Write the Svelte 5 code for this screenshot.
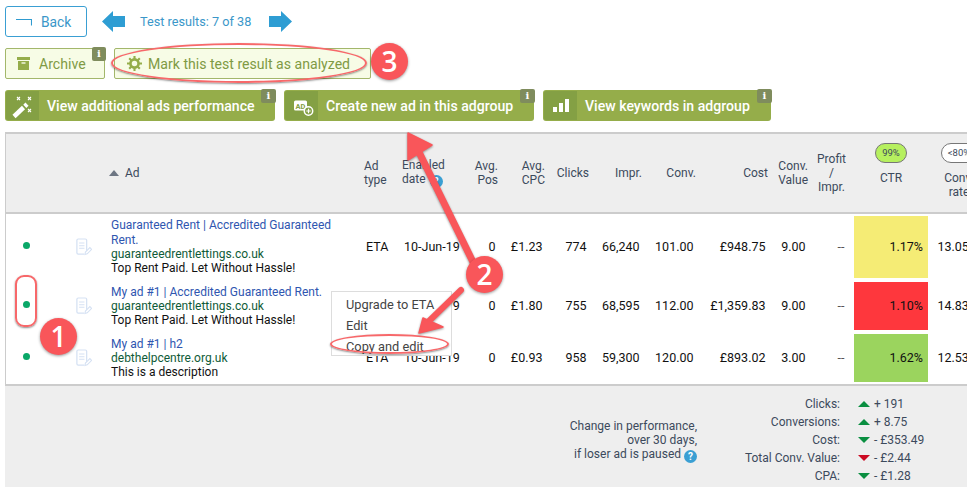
<script lang="ts">
  const rows = [
    { title: ['Guaranteed Rent | Accredited Guaranteed', 'Rent.'], url: 'guaranteedrentlettings.co.uk', desc: 'Top Rent Paid. Let Without Hassle!', type: 'ETA', date: '10-Jun-19', pos: '0', cpc: '£1.23', clicks: '774', impr: '66,240', conv: '101.00', cost: '£948.75', value: '9.00', ctr: '1.17%', tone: 'yellow', rate: '13.05%' },
    { title: ['My ad #1 | Accredited Guaranteed Rent.'], url: 'guaranteedrentlettings.co.uk', desc: 'Top Rent Paid. Let Without Hassle!', type: 'ETA', date: '10-Jun-19', pos: '0', cpc: '£1.80', clicks: '755', impr: '68,595', conv: '112.00', cost: '£1,359.83', value: '9.00', ctr: '1.10%', tone: 'red', rate: '14.83%' },
    { title: ['My ad #1 | h2'], url: 'debthelpcentre.org.uk', desc: 'This is a description', type: 'ETA', date: '10-Jun-19', pos: '0', cpc: '£0.93', clicks: '958', impr: '59,300', conv: '120.00', cost: '£893.02', value: '3.00', ctr: '1.62%', tone: 'green', rate: '12.53%' }
  ];

  const changes = [
    { label: 'Clicks:', dir: 'up', tone: 'good', value: '+ 191' },
    { label: 'Conversions:', dir: 'up', tone: 'good', value: '+ 8.75' },
    { label: 'Cost:', dir: 'down', tone: 'good', value: '- £353.49' },
    { label: 'Total Conv. Value:', dir: 'down', tone: 'bad', value: '- £2.44' },
    { label: 'CPA:', dir: 'down', tone: 'good', value: '- £1.28' }
  ];
</script>

<div class="page">
  <div class="nav">
    <button class="back">
      <svg width="16" height="8" viewBox="0 0 16 8"><path d="M0 1.500h15.500V7.500" fill="none" stroke="#2f9bd0" stroke-width="1.100" /></svg>
      Back
    </button>
    <svg class="arrow" width="23" height="21" viewBox="0 0 23 21"><path d="M0 10.500 11 0v5h12v11H11v5z" fill="#2e9dd3" /></svg>
    <span class="count">Test results: 7 of 38</span>
    <svg class="arrow" width="23" height="21" viewBox="0 0 23 21"><path d="M23 10.500 12 0v5H0v11h12v5z" fill="#2e9dd3" /></svg>
  </div>

  <div class="actions">
    <button class="light archive">
      <svg width="13" height="13" viewBox="0 0 13 13"><path d="M0 0h13v3H0zM1 4h11v9H1z" fill="#95ad4a" /><path d="M4.500 6h4" stroke="#f7fbe6" stroke-width="1.400" /></svg>
      Archive
      <span class="info">i</span>
    </button>
    <button class="light mark">
      <svg width="15" height="15" viewBox="0 0 17 17"><circle cx="8.500" cy="8.500" r="4.600" fill="none" stroke="#95ad4a" stroke-width="3" /><path d="M8.500 0v4M8.500 13v4M0 8.500h4M13 8.500h4M2.500 2.500l2.800 2.800M11.700 11.700l2.800 2.800M14.500 2.500l-2.800 2.800M5.300 11.700l-2.800 2.800" stroke="#95ad4a" stroke-width="2.400" /></svg>
      Mark this test result as analyzed
    </button>
  </div>

  <div class="actions tools">
    <button class="solid first">
      <span class="ico">
        <svg width="26" height="26" viewBox="0 0 26 26"><path d="M4 23.500 13.500 14.500" stroke="#fff" stroke-width="4.500" /><path d="M14.800 13.300 17 11.200" stroke="#fff" stroke-width="4.500" /><path d="M7 4l3 3M10 4 7 7M18 4l3 3M21 4l-3 3M18 16l3 3M21 16l-3 3" stroke="#fff" stroke-width="1.100" /></svg>
      </span>
      View additional ads performance
      <span class="info">i</span>
    </button>
    <button class="solid second">
      <span class="ico">
        <svg width="26" height="24" viewBox="0 0 26 24"><rect x="5" y="6.500" width="13" height="10" rx="1.500" fill="#fff" /><text x="11.500" y="14.500" text-anchor="middle" class="ad-mark">AD</text><circle cx="19.500" cy="17" r="4.200" fill="#84a044" stroke="#fff" stroke-width="1.500" /><path d="M17.300 17h4.400M19.500 14.800v4.400" stroke="#fff" stroke-width="1.200" /></svg>
      </span>
      Create new ad in this adgroup
      <span class="info">i</span>
    </button>
    <button class="solid third">
      <span class="ico">
        <svg width="16" height="13" viewBox="0 0 16 13"><path d="M0 8h4v5H0zM6 4h4v9H6zM12 0h4v13h-4z" fill="#fff" /></svg>
      </span>
      View keywords in adgroup
      <span class="info">i</span>
    </button>
  </div>

  <table>
    <colgroup>
      <col class="c-dot" /><col class="c-icon" /><col class="c-ad" /><col class="c-type" /><col class="c-date" />
      <col class="c-pos" /><col class="c-cpc" /><col class="c-clicks" /><col class="c-impr" /><col class="c-conv" />
      <col class="c-cost" /><col class="c-value" /><col class="c-profit" /><col class="c-ctr" /><col class="c-rate" />
    </colgroup>
    <thead>
      <tr>
        <th></th>
        <th></th>
        <th class="left ad-head"><span class="sort"></span>Ad</th>
        <th class="left">Ad<br />type</th>
        <th class="left">Enabled<br />date <span class="help head-help">?</span></th>
        <th>Avg.<br />Pos</th>
        <th>Avg.<br />CPC</th>
        <th>Clicks</th>
        <th>Impr.</th>
        <th>Conv.</th>
        <th>Cost</th>
        <th>Conv.<br />Value</th>
        <th class="center">Profit<br />/<br />Impr.</th>
        <th class="center metric">
          <span class="pill hit">99%</span>
          CTR
        </th>
        <th class="center metric">
          <span class="pill">&lt;80%</span>
          Conv.<br />rate
        </th>
      </tr>
    </thead>
    <tbody>
      {#each rows as row}
        <tr>
          <td class="center"><span class="dot"></span></td>
          <td class="center doc-cell">
            <svg class="doc" width="16" height="18" viewBox="0 0 18 20">
              <path d="M12 15V2.500A1.500 1.500 0 0 0 10.500 1h-8A1.500 1.500 0 0 0 1 2.500v14A1.500 1.500 0 0 0 2.500 18H9" fill="none" stroke="#d5e1f3" stroke-width="1.400" />
              <path d="M3.500 5.500h6M3.500 8.500h6M3.500 11.500h6" stroke="#d5e1f3" stroke-width="1.200" />
              <path d="M10 18.500l.6-2.800 5-5 2 2-5 5z" fill="#fff" stroke="#d5e1f3" stroke-width="1.200" />
            </svg>
          </td>
          <td class="left ad">
            {#each row.title as line}<span class="title">{line}</span>{/each}
            <span class="url">{row.url}</span>
            <span>{row.desc}</span>
          </td>
          <td class="left">{row.type}</td>
          <td class="left">{row.date}</td>
          <td>{row.pos}</td>
          <td>{row.cpc}</td>
          <td>{row.clicks}</td>
          <td>{row.impr}</td>
          <td>{row.conv}</td>
          <td>{row.cost}</td>
          <td>{row.value}</td>
          <td class="dash">--</td>
          <td class="score {row.tone}">{row.ctr}</td>
          <td class="rate">{row.rate}</td>
        </tr>
      {/each}
    </tbody>
  </table>

  <div class="summary">
    <p class="note">
      Change in performance,<br />over 30 days,<br />if loser ad is paused <span class="help">?</span>
    </p>
    <div class="changes">
      {#each changes as item}
        <span class="label">{item.label}</span>
        <span class="tri {item.dir} {item.tone}"></span>
        <span class="val">{item.value}</span>
      {/each}
    </div>
  </div>

  <!-- context menu and tutorial annotations sit on top of the table -->
  <div class="menu">
    <span>Upgrade to ETA</span>
    <span>Edit</span>
    <span>Copy and edit</span>
  </div>

  <span class="ring ring-mark"></span>
  <span class="ring ring-dot"></span>
  <span class="ring ring-copy"></span>

  <svg class="pointers" width="967" height="487" viewBox="0 0 967 487">
    <path d="M473 262 415 144" stroke="#f9565a" stroke-width="7" stroke-linecap="round" fill="none" />
    <path d="M408 133 408 160 432 145z" fill="#f9565a" stroke="#f9565a" stroke-width="1.500" stroke-linejoin="round" />
    <path d="M461 290 428 322" stroke="#f9565a" stroke-width="6" stroke-linecap="round" fill="none" />
    <path d="M419 333 423 318 443 327z" fill="#f9565a" stroke="#f9565a" stroke-width="1.500" stroke-linejoin="round" />
  </svg>

  <span class="step step-1">1</span>
  <span class="step step-2">2</span>
  <span class="step step-3">3</span>
</div>

<style>
  :global(body) {
    margin: 0;
    background: #fff;
  }

  .page {
    position: relative;
    width: 967px;
    height: 487px;
    overflow: hidden;
    font-family: Roboto, "Liberation Sans", sans-serif;
    font-size: 12px;
    color: #111;
  }

  button {
    position: relative;
    display: flex;
    align-items: center;
    box-sizing: border-box;
    padding: 0;
    font-family: inherit;
    cursor: pointer;
  }

  .nav {
    display: flex;
    align-items: center;
    height: 31px;
    padding: 6px 0 0 5px;
  }

  .back {
    width: 82px;
    height: 31px;
    gap: 9px;
    padding-left: 10px;
    background: #fff;
    border: 1px solid #3a9fd3;
    border-radius: 3px;
    color: #3a97c9;
    font-size: 13.800px;
  }

  .arrow {
    margin-left: 15px;
  }

  .count {
    width: 129px;
    margin-left: 15px;
    color: #3a97c9;
    font-size: 12.700px;
  }

  .count + .arrow {
    margin-left: 0;
  }

  .actions {
    display: flex;
    gap: 9px;
    margin: 11px 0 0 5px;
  }

  .light {
    height: 31px;
    background: #f7fce6;
    border: 1px solid #a3b76b;
    border-radius: 2px;
    color: #7f9a44;
    font-size: 14.100px;
  }

  .archive {
    width: 100px;
    gap: 9px;
    padding-left: 11px;
  }

  .mark {
    width: 257px;
    gap: 6px;
    padding-left: 12px;
  }

  .solid {
    height: 31px;
    background: #95ad4a;
    border: 0;
    border-radius: 3px;
    color: #fff;
    font-size: 14.100px;
    font-weight: 500;
  }

  .first { width: 270px; }
  .second { width: 250px; }
  .third { width: 228px; }

  .ico {
    display: flex;
    align-items: center;
    justify-content: center;
    align-self: stretch;
    width: 33px;
    margin: 1px 8px 1px 1px;
    background: #84a044;
    border-radius: 2px 0 0 2px;
  }

  .ad-mark {
    font-family: Roboto, sans-serif;
    font-size: 7.500px;
    font-weight: 700;
    fill: #84a044;
  }

  .info {
    position: absolute;
    top: -2px;
    right: -2px;
    width: 14px;
    height: 14px;
    border-radius: 2px;
    background: #7f8c5d;
    color: #fff;
    font-family: "DejaVu Serif", serif;
    font-size: 10px;
    font-weight: 700;
    line-height: 14px;
    text-align: center;
  }

  .solid .info {
    top: -1px;
    right: -1px;
    width: 15px;
  }

  table {
    width: 982px;
    margin: 11px 0 0 5px;
    border-collapse: separate;
    border-spacing: 0;
    table-layout: fixed;
    border-left: 1px solid #ccc;
    border-top: 2px solid #ccc;
  }

  .c-dot { width: 53px; }
  .c-icon { width: 47px; }
  .c-ad { width: 254px; }
  .c-type { width: 38px; }
  .c-date { width: 62px; }
  .c-pos { width: 42px; }
  .c-cpc { width: 47px; }
  .c-clicks { width: 44px; }
  .c-impr { width: 53px; }
  .c-conv { width: 54px; }
  .c-cost { width: 72px; }
  .c-value { width: 40px; }
  .c-profit { width: 39px; }
  .c-ctr { width: 80px; }
  .c-rate { width: 56px; }

  th {
    height: 80px;
    padding: 0 4px;
    box-sizing: border-box;
    background: #eee;
    border-bottom: 2px solid #ccc;
    color: #3c4a5c;
    font-size: 12px;
    font-weight: 400;
    line-height: 14px;
    text-align: right;
    white-space: nowrap;
  }

  td {
    padding: 0 6.500px 0 4px;
    font-size: 12.500px;
    line-height: 14.300px;
    text-align: right;
    white-space: nowrap;
  }

  tbody tr:nth-child(1) { height: 66px; }
  tbody tr:nth-child(2),
  tbody tr:nth-child(3) { height: 52px; }

  th.left { text-align: left; padding-right: 0; }
  td.left { text-align: left; padding: 0 0 0 6px; }
  td.center { text-align: center; padding: 0; }
  th.center { text-align: center; }

  .ad-head { padding-left: 3px; }

  .sort {
    display: inline-block;
    margin-right: 6px;
    vertical-align: 1px;
    border: 5px solid transparent;
    border-top: 0;
    border-bottom: 6px solid #6d7683;
  }

  td.ad {
    padding-left: 5px;
    font-size: 12px;
  }

  .ad span { display: block; }
  .title { color: #2f56b0; }
  .url { color: #0f5b38; }

  .dot {
    display: block;
    position: relative;
    left: -6px;
    top: -2px;
    width: 7px;
    height: 7px;
    margin: 0 auto;
    border-radius: 50%;
    background: #0aa868;
  }

  td.doc-cell { padding-left: 3px; }
  .doc { display: block; margin: 0 auto; }
  .dash { color: #555; }

  .metric { vertical-align: top; }

  .pill {
    display: block;
    width: fit-content;
    margin: 9px auto 8px;
    padding: 0 6px;
    border: 1px solid #777;
    border-radius: 10px;
    font-size: 9.500px;
    line-height: 18px;
  }

  .pill.hit { background: #b6f05f; }
  .metric:last-child .pill { background: #fff; }

  td.score {
    padding-right: 5px;
    border: solid #fff;
    border-width: 2px 3px;
    background-clip: padding-box;
  }

  .yellow { background-color: #f5ec75; }
  .red { background-color: #fe373d; }
  .green { background-color: #9bd45e; }

  td.rate { padding-right: 9px; }

  .summary {
    box-sizing: border-box;
    display: flex;
    align-items: flex-start;
    height: 103px;
    padding: 9px 0 0 534px;
    margin-left: 5px;
    background: #eee;
    border-top: 2px solid #ccc;
    color: #3c4a5c;
  }

  .note {
    width: 158px;
    margin: 24px 0 0;
    line-height: 14px;
    text-align: right;
  }

  .help {
    display: inline-block;
    width: 13px;
    height: 13px;
    border-radius: 50%;
    background: #3a9fd3;
    color: #fff;
    font-size: 10px;
    font-weight: 700;
    line-height: 13px;
    text-align: center;
    vertical-align: -2px;
  }

  .head-help { margin-left: 1px; }

  .changes {
    display: grid;
    grid-template-columns: 96px 30px auto;
    grid-auto-rows: 18px;
    align-items: center;
    margin-left: 47px;
  }

  .label {
    text-align: right;
    white-space: nowrap;
  }

  .tri {
    justify-self: start;
    width: 0;
    margin-left: 18px;
    border: 6px solid transparent;
  }

  .tri.up { border-top: 0; border-bottom: 6px solid #0a8f41; }
  .tri.down { border-bottom: 0; border-top: 6px solid #0a8f41; }
  .tri.down.bad { border-top-color: #cc0a22; }

  .val {
    padding-left: 4px;
    white-space: nowrap;
  }

  .menu {
    position: absolute;
    left: 331px;
    top: 291px;
    display: flex;
    flex-direction: column;
    box-sizing: border-box;
    width: 121px;
    height: 65px;
    padding: 2px 0 0 14px;
    background: #fff;
    border: 1px solid #ddd;
    color: #444;
    font-size: 12.800px;
    line-height: 21px;
  }

  .ring {
    position: absolute;
    box-sizing: border-box;
    border: 2px solid #f7686a;
    box-shadow: 0 1px 2px rgba(0, 0, 0, 0.45);
  }

  .ring-mark {
    left: 111px;
    top: 43px;
    width: 256px;
    height: 40px;
    border-radius: 50%;
  }

  .ring-dot {
    left: 15px;
    top: 275px;
    width: 22px;
    height: 52px;
    border-radius: 9px;
  }

  .ring-copy {
    left: 330px;
    top: 334px;
    width: 119px;
    height: 20px;
    border-radius: 50%;
  }

  .pointers {
    position: absolute;
    left: 0;
    top: 0;
    filter: drop-shadow(0 1px 1px rgba(0, 0, 0, 0.4));
  }

  .step {
    position: absolute;
    width: 37px;
    height: 37px;
    border-radius: 50%;
    background: #f9565a;
    box-shadow: 0 1px 3px rgba(0, 0, 0, 0.4);
    color: #fff;
    font-family: "Open Sans", sans-serif;
    font-size: 28px;
    font-weight: 600;
    line-height: 37px;
    text-align: center;
  }

  .step-1 { left: 40px; top: 318px; }
  .step-2 { left: 466px; top: 256px; }
  .step-3 { left: 371px; top: 43px; }
</style>
